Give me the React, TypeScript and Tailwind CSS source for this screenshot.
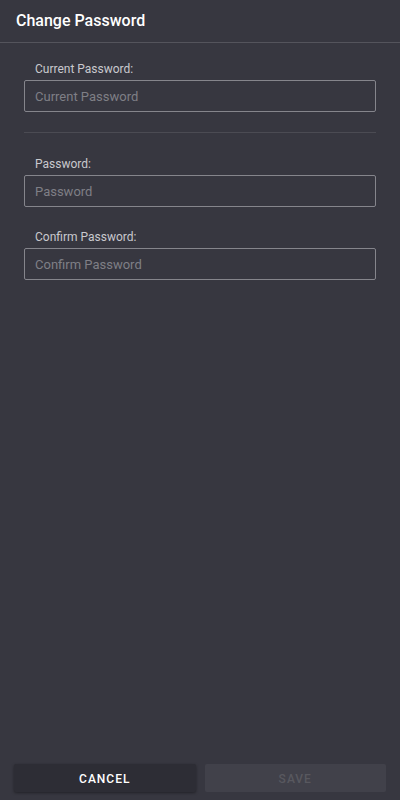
import React from 'react';

const Field: React.FC<{ label: string; placeholder: string }> = ({ label, placeholder }) => (
  <div className="flex flex-col">
    <label className="pl-[11px] text-[12px] leading-[14px] text-[#c9c9ce] mb-[4px]">{label}</label>
    <input
      type="password"
      placeholder={placeholder}
      className="h-[32px] w-full rounded-[2px] border border-[#85858c] bg-transparent px-[10px] text-[13px] text-white outline-none placeholder:text-[#7f7f86]"
    />
  </div>
);

const App: React.FC = () => {
  return (
    <div className="flex h-[800px] w-[400px] flex-col bg-[#373740] font-['Roboto',sans-serif]">
      <header className="flex h-[43px] items-center border-b border-[#54545c] px-[16px]">
        <h1 className="text-[16px] font-medium text-white">Change Password</h1>
      </header>

      <main className="flex-1 px-[24px] pt-[19px]">
        <Field label="Current Password:" placeholder="Current Password" />
        <div className="mt-[20px] mb-[20px] h-px bg-[#4b4b53]" />
        <div className="flex flex-col gap-[23px] pt-[4px]">
          <Field label="Password:" placeholder="Password" />
          <Field label="Confirm Password:" placeholder="Confirm Password" />
        </div>
      </main>

      <footer className="flex gap-[9px] px-[14px] pb-[8px]">
        <button className="h-[28px] flex-1 rounded-[2px] bg-[#2d2d35] pt-px text-[12px] font-medium tracking-[1px] text-white shadow-[0_1px_3px_rgba(0,0,0,0.4)]">
          CANCEL
        </button>
        <button disabled className="h-[28px] flex-1 rounded-[2px] bg-[#41414a] pt-px text-[12px] font-medium tracking-[1px] text-[#58585f]">
          SAVE
        </button>
      </footer>
    </div>
  );
};

export default App;
